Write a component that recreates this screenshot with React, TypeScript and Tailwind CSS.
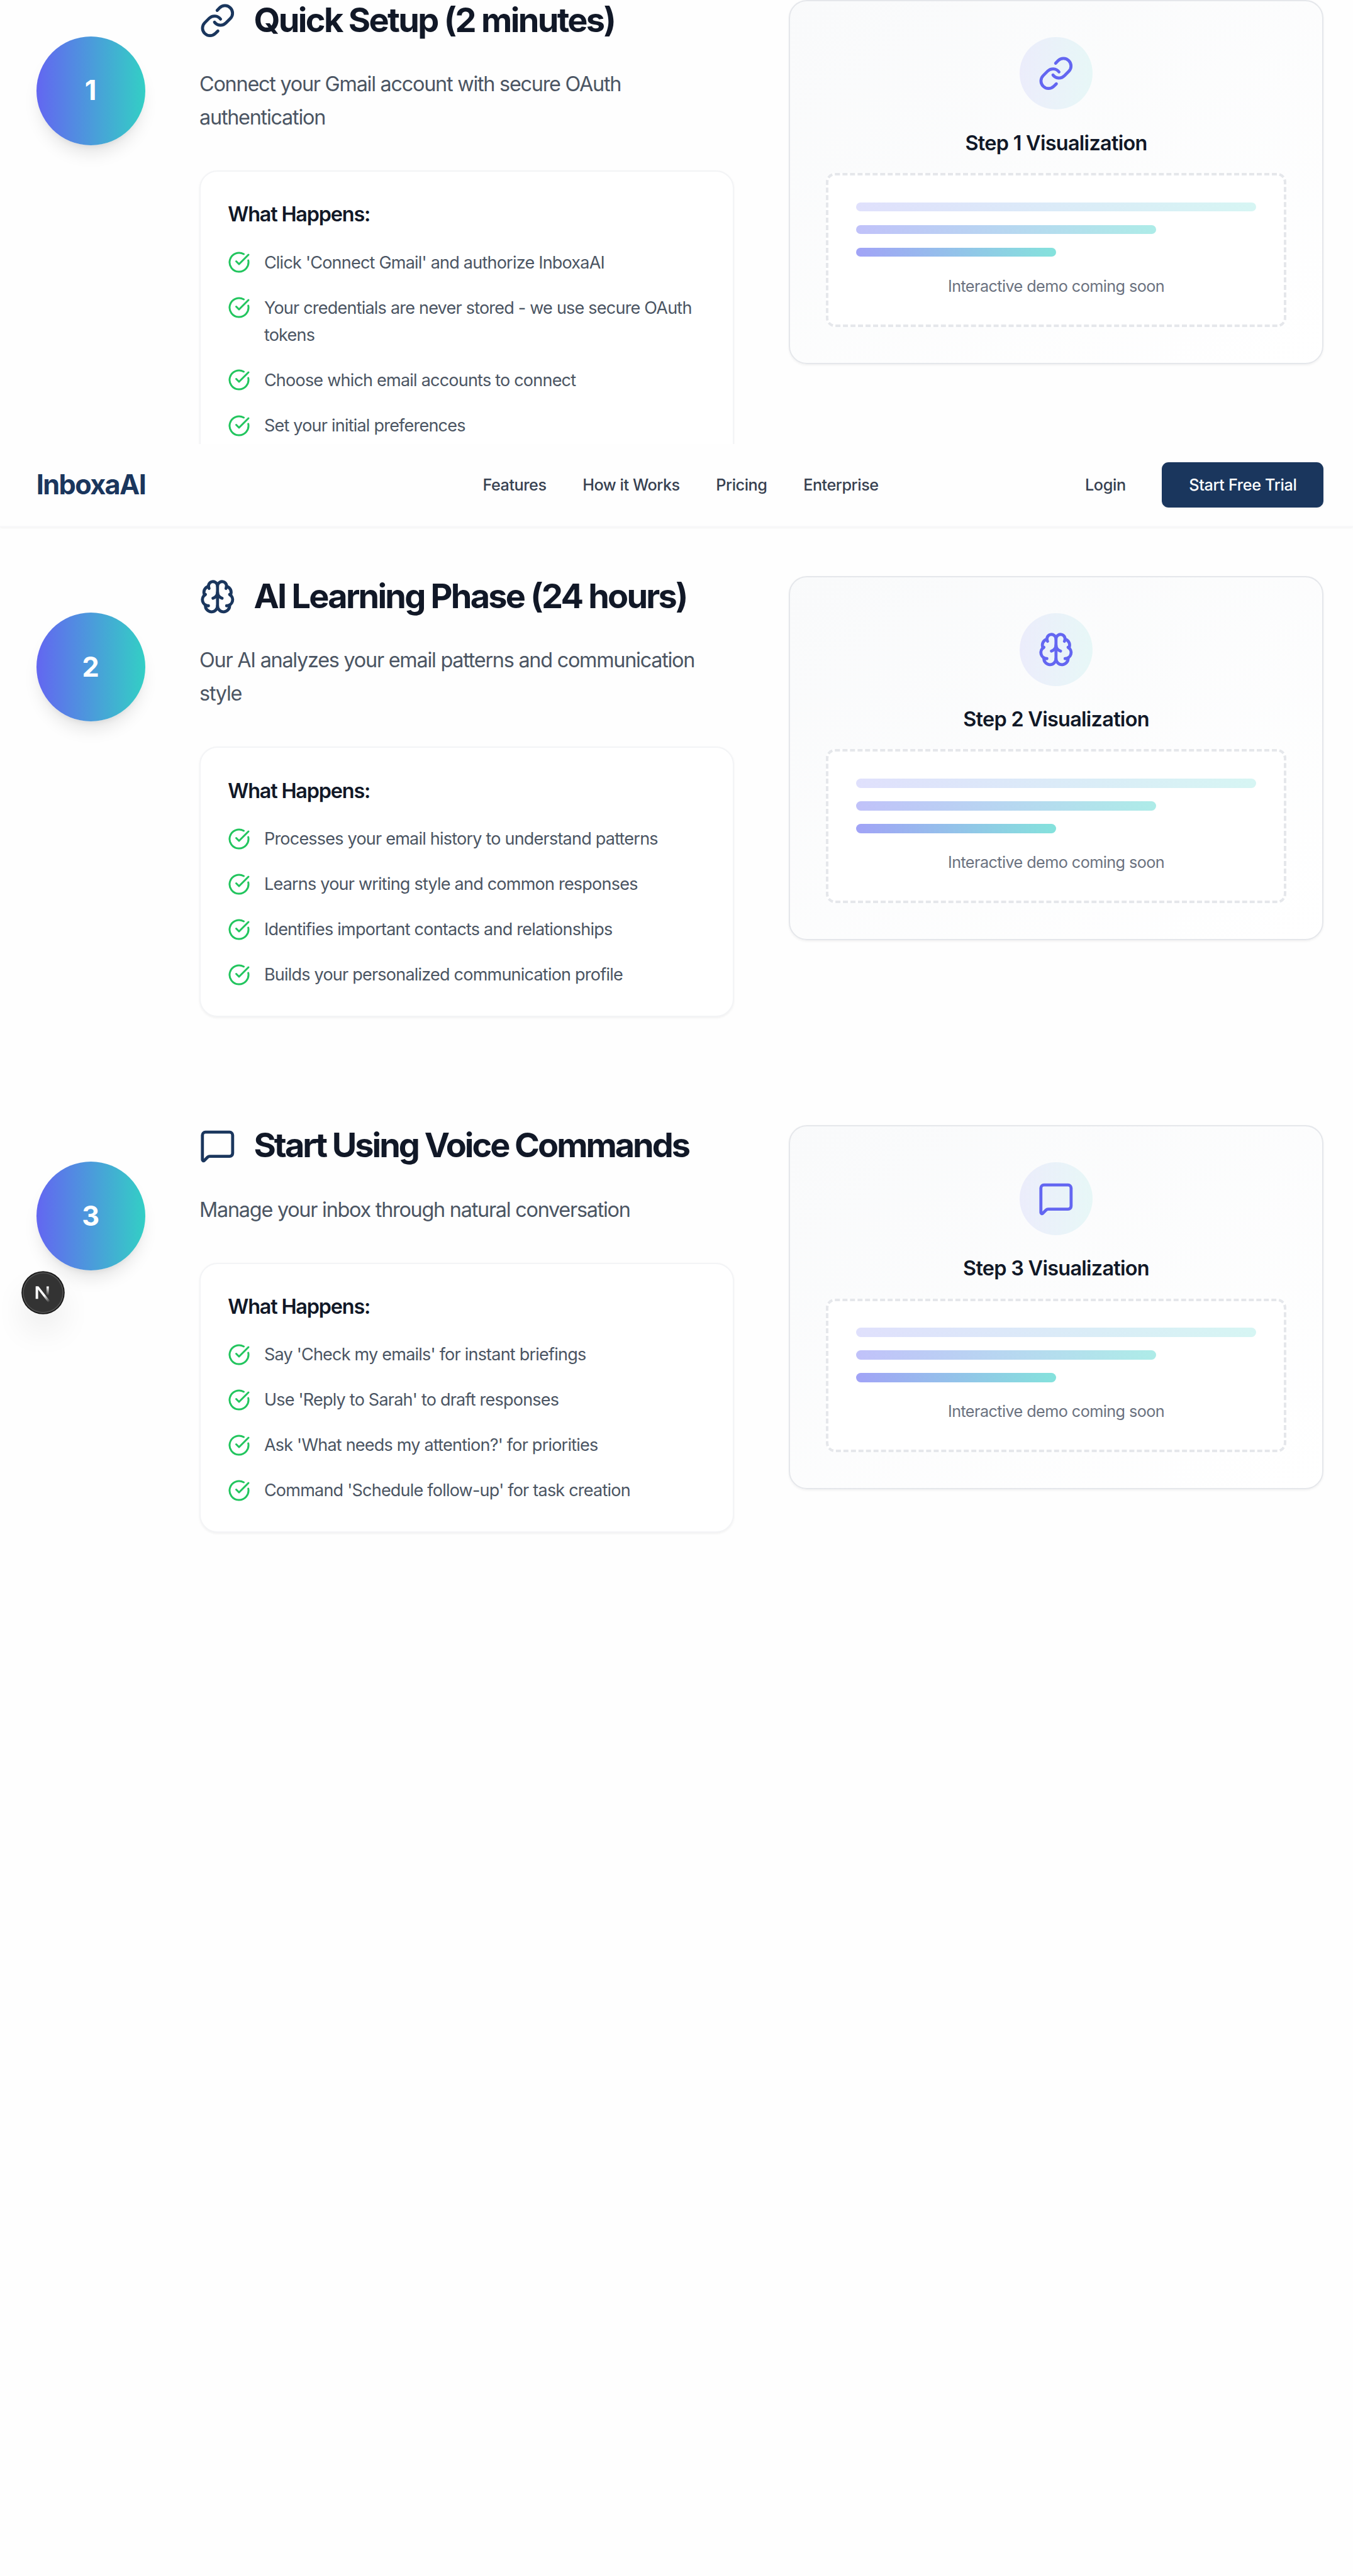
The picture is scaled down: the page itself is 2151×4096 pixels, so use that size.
import React from "react";
import { Brain, CircleCheckBig, Link, MessageSquare } from "lucide-react";

type Icon = React.ComponentType<{ className?: string; strokeWidth?: number }>;

interface Step {
  number: number;
  icon: Icon;
  title: string;
  tracking: string;
  description: string;
  items: string[];
}

const steps: Step[] = [
  {
    number: 1,
    icon: Link,
    title: "Quick Setup (2 minutes)",
    tracking: "tracking-[-0.049em]",
    description: "Connect your Gmail account with secure OAuth authentication",
    items: [
      "Click 'Connect Gmail' and authorize InboxaAI",
      "Your credentials are never stored - we use secure OAuth tokens",
      "Choose which email accounts to connect",
      "Set your initial preferences",
    ],
  },
  {
    number: 2,
    icon: Brain,
    title: "AI Learning Phase (24 hours)",
    tracking: "tracking-[-0.051em]",
    description: "Our AI analyzes your email patterns and communication style",
    items: [
      "Processes your email history to understand patterns",
      "Learns your writing style and common responses",
      "Identifies important contacts and relationships",
      "Builds your personalized communication profile",
    ],
  },
  {
    number: 3,
    icon: MessageSquare,
    title: "Start Using Voice Commands",
    tracking: "tracking-[-0.056em]",
    description: "Manage your inbox through natural conversation",
    items: [
      "Say 'Check my emails' for instant briefings",
      "Use 'Reply to Sarah' to draft responses",
      "Ask 'What needs my attention?' for priorities",
      "Command 'Schedule follow-up' for task creation",
    ],
  },
];

function StepVisual({ step }: { step: Step }) {
  const StepIcon = step.icon;
  return (
    <div className="self-start rounded-2xl border-[1.12px] border-[#e5e7eb] bg-linear-to-br from-[#f9fafb] to-white px-8 pt-[31.6px] pb-[31.8px] text-center shadow-xs">
      <div className="mx-auto mb-4 flex size-16 items-center justify-center rounded-full bg-linear-to-r/srgb from-[#6366f1]/10 to-[#33cfc5]/10">
        <StepIcon className="size-8 text-[#6366f1]" />
      </div>
      <h4 className="mb-3 text-lg/7 font-semibold tracking-[-0.022em] text-[#111827]">
        Step {step.number} Visualization
      </h4>
      <div className="rounded-lg border-[2.23px] border-dashed border-[#e5e7eb] bg-white px-6 py-[23.7px]">
        <div className="flex flex-col gap-3">
          <div className="h-2 rounded-full bg-linear-to-r/srgb from-[#6366f1]/20 to-[#33cfc5]/20" />
          <div className="h-2 w-3/4 rounded-full bg-linear-to-r/srgb from-[#6366f1]/40 to-[#33cfc5]/40" />
          <div className="h-2 w-1/2 rounded-full bg-linear-to-r/srgb from-[#6366f1]/60 to-[#33cfc5]/60" />
        </div>
        <p className="mt-4 text-sm/5 tracking-[-0.023em] text-[#6b7280]">Interactive demo coming soon</p>
      </div>
    </div>
  );
}

function StepRow({ step }: { step: Step }) {
  const StepIcon = step.icon;
  return (
    <section className="flex gap-12">
      <div className="mt-8 flex size-24 shrink-0 items-center justify-center rounded-full bg-linear-to-r/srgb from-[#6366f1] to-[#33cfc5] text-2xl font-bold text-white shadow-lg">
        {step.number}
      </div>
      <div className="grid flex-1 grid-cols-2 gap-12">
        <div>
          <div className="mb-6 flex items-center gap-4">
            <StepIcon className="size-8 shrink-0 text-[#1a365d]" />
            <h3 className={`text-3xl/9 font-bold whitespace-nowrap text-[#111827] ${step.tracking}`}>{step.title}</h3>
          </div>
          <p className="mb-8 text-lg/[1.625] tracking-[-0.039em] text-[#4b5563]">{step.description}</p>
          <div className="rounded-2xl border-[1.12px] border-[#f3f4f6] bg-white p-6 shadow-xs">
            <h4 className="mb-4 text-lg/7 font-semibold tracking-[-0.037em] text-[#111827]">What Happens:</h4>
            <ul className="flex flex-col gap-4">
              {step.items.map((item) => (
                <li key={item} className="flex items-start gap-3">
                  <CircleCheckBig className="mt-0.5 size-5 shrink-0 text-[#22c55e]" />
                  <span className="text-[15px]/6 tracking-[-0.029em] text-[#4b5563]">{item}</span>
                </li>
              ))}
            </ul>
          </div>
        </div>
        <StepVisual step={step} />
      </div>
    </section>
  );
}

function NavBar() {
  return (
    <header className="absolute inset-x-0 top-[392px] flex h-[73px] items-center border-b-[1.12px] border-[#f3f4f6]/60 bg-[#fefefe] pr-[26px] pl-8 shadow-xs">
      <span className="w-[394px] text-2xl font-bold tracking-[-0.037em] text-[#1a365d]">InboxaAI</span>
      <nav className="flex gap-8 text-sm font-medium tracking-[-0.018em] text-[#374151]">
        <a>Features</a>
        <a>How it Works</a>
        <a>Pricing</a>
        <a>Enterprise</a>
      </nav>
      <div className="ml-auto flex items-center gap-8 text-sm font-medium tracking-[-0.014em]">
        <a className="text-[#374151]">Login</a>
        <button className="h-10 w-[142.5px] rounded-md bg-[#1a365d] text-white shadow-xs">Start Free Trial</button>
      </div>
    </header>
  );
}

function DevBadge() {
  return (
    <div className="absolute top-[1122.8px] left-5 flex size-9 items-center justify-center rounded-full bg-[#333] shadow-[0_0_0_1px_#171717,inset_0_0_0_1px_hsla(0,0%,100%,0.14),0_16px_32px_-8px_rgba(0,0,0,0.24)]">
      <svg className="size-5" viewBox="0 0 20 20" fill="none">
        <defs>
          <linearGradient id="diagonal" x1="11.4" y1="12.6" x2="15.8" y2="18.4" gradientUnits="userSpaceOnUse">
            <stop stopColor="white" />
            <stop offset="1" stopColor="white" stopOpacity="0" />
          </linearGradient>
          <linearGradient id="stem" x1="14.4" y1="5" x2="14.4" y2="12.8" gradientUnits="userSpaceOnUse">
            <stop stopColor="white" />
            <stop offset="1" stopColor="white" stopOpacity="0" />
          </linearGradient>
        </defs>
        <path d="M3.7 4.7h2.2v11H3.7z" fill="white" />
        <path d="M3.8 4.7h2.5l10.1 12.9-1.7 1.3z" fill="url(#diagonal)" />
        <path d="M13.3 4.7h2.1v8.1h-2.1z" fill="url(#stem)" />
      </svg>
    </div>
  );
}

export default function App() {
  return (
    <div className="relative h-[2273.6px] w-full overflow-hidden bg-[#fefefe] font-['Inter',sans-serif] [zoom:1.8015]">
      <main className="flex flex-col gap-24 pr-[26px] pl-8">
        {steps.map((step) => (
          <StepRow key={step.number} step={step} />
        ))}
      </main>
      <NavBar />
      <DevBadge />
    </div>
  );
}
